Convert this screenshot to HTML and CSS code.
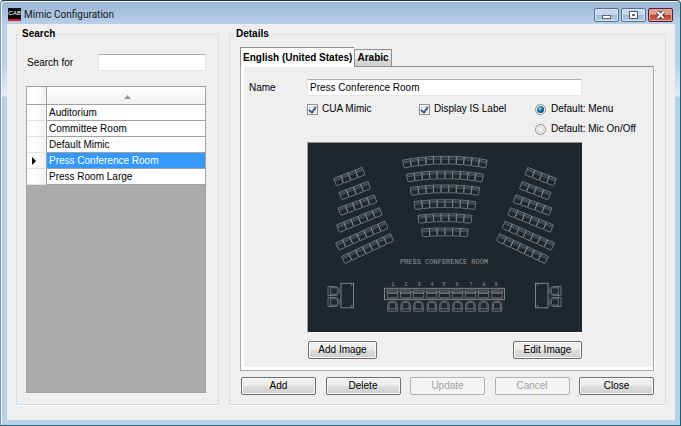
FILE: index.html
```html
<!DOCTYPE html>
<html lang="en">
<head>
<meta charset="utf-8">
<title>Mimic Configuration</title>
<link rel="stylesheet" href="styles.css">
</head>
<body>
<div class="window">
  <header class="titlebar">
    <span class="logo">CAB</span>
    <h1 class="title">Mimic Configuration</h1>
    <div class="caption-buttons">
      <button class="caption" type="button" aria-label="Minimize">
        <svg viewBox="0 0 23 12"><rect x="7.500" y="6.500" width="8" height="3" fill="#fff" stroke="#5a6472"/></svg>
      </button>
      <button class="caption" type="button" aria-label="Maximize">
        <svg viewBox="0 0 23 12"><path d="M7.500 2.500h8v7h-8z M10.500 5.500h2v1h-2z" fill="#fff" fill-rule="evenodd" stroke="#4d5666"/></svg>
      </button>
      <button class="caption caption-close" type="button" aria-label="Close window">
        <svg viewBox="0 0 23 12"><path d="M8.500 3l6 6M14.500 3l-6 6" stroke="#4e3a42" stroke-width="4"/><path d="M8.500 3l6 6M14.500 3l-6 6" stroke="#fff" stroke-width="2"/></svg>
      </button>
    </div>
  </header>

  <main class="client">
    <fieldset class="group search">
      <legend>Search</legend>
      <div class="search-row">
        <label for="search">Search for</label>
        <input class="field" id="search" type="text">
      </div>
      <div class="list">
        <table>
          <thead>
            <tr><th class="marker"></th><th class="sort"><svg viewBox="0 0 7 4" aria-label="Sorted ascending"><path d="M0 4L3.500 0L7 4z" fill="#999"/></svg></th></tr>
          </thead>
          <tbody>
            <tr><td class="marker"></td><td>Auditorium</td></tr>
            <tr><td class="marker"></td><td>Committee Room</td></tr>
            <tr><td class="marker"></td><td>Default Mimic</td></tr>
            <tr class="selected"><td class="marker"><svg viewBox="0 0 4 8"><path d="M0 0L4 4L0 8z"/></svg></td><td>Press Conference Room</td></tr>
            <tr><td class="marker"></td><td>Press Room Large</td></tr>
          </tbody>
        </table>
      </div>
    </fieldset>

    <fieldset class="group details">
      <legend>Details</legend>
      <div class="tabs" role="tablist">
        <button class="tab active" type="button" role="tab" aria-selected="true">English (United States)</button>
        <button class="tab" type="button" role="tab" aria-selected="false">Arabic</button>
      </div>
      <div class="panel">
        <label for="name">Name</label>
        <input class="field name" id="name" type="text" value="Press Conference Room">
        <div class="options">
          <label class="option"><input type="checkbox" checked>CUA Mimic</label>
          <label class="option"><input type="checkbox" checked>Display IS Label</label>
          <div class="radios">
            <label class="option"><input type="radio" name="default" checked>Default: Menu</label>
            <label class="option"><input type="radio" name="default">Default: Mic On/Off</label>
          </div>
        </div>
        <div class="mimic">
          <svg viewBox="308 143 274 189" fill="none" stroke="#8d8d8b" stroke-width="0.700">
            <defs>
              <!-- One seat, top edge centred on 0,0 -->
              <g id="seat">
                <path d="M-3.800 0H3.800V6.800Q3.800 7.900 2.800 7.900H-2.800Q-3.800 7.900 -3.800 6.800Z"/>
                <path d="M-3.800 1.600H3.800M-3 2.900H3" stroke-opacity="0.600"/>
              </g>
              <!-- Curved rows, each built on the shorter one -->
              <g id="c6">
                <use href="#seat" x="-3.900"/><use href="#seat" x="3.900"/>
                <use href="#seat" transform="translate(-11.700 .200) rotate(-2)"/><use href="#seat" transform="translate(11.700 .200) rotate(2)"/>
                <use href="#seat" transform="translate(-19.400 .700) rotate(-5)"/><use href="#seat" transform="translate(19.400 .700) rotate(5)"/>
              </g>
              <g id="c8"><use href="#c6"/><use href="#seat" transform="translate(-27.100 1.500) rotate(-7)"/><use href="#seat" transform="translate(27.100 1.500) rotate(7)"/></g>
              <g id="c10"><use href="#c8"/><use href="#seat" transform="translate(-34.700 2.500) rotate(-9)"/><use href="#seat" transform="translate(34.700 2.500) rotate(9)"/></g>
              <g id="c7">
                <use href="#seat"/>
                <use href="#seat" x="-7.700"/><use href="#seat" x="7.700"/>
                <use href="#seat" transform="translate(-15.500 .400) rotate(-4)"/><use href="#seat" transform="translate(15.500 .400) rotate(4)"/>
                <use href="#seat" transform="translate(-23.200 1.100) rotate(-6)"/><use href="#seat" transform="translate(23.200 1.100) rotate(6)"/>
              </g>
              <g id="c9"><use href="#c7"/><use href="#seat" transform="translate(-30.900 2) rotate(-8)"/><use href="#seat" transform="translate(30.900 2) rotate(8)"/></g>
              <g id="c11"><use href="#c9"/><use href="#seat" transform="translate(-38.500 3.200) rotate(-10)"/><use href="#seat" transform="translate(38.500 3.200) rotate(10)"/></g>
              <!-- Straight rows for the wings -->
              <g id="s4"><use href="#seat" x="3.900"/><use href="#seat" x="11.600"/><use href="#seat" x="19.300"/><use href="#seat" x="27"/></g>
              <g id="s5"><use href="#s4"/><use href="#seat" x="34.700"/></g>
              <g id="s6"><use href="#s5"/><use href="#seat" x="42.400"/></g>
              <g id="s7"><use href="#s6"/><use href="#seat" x="50.100"/></g>
              <g id="wing">
                <use href="#s4" transform="translate(333.500 178.500) rotate(-21)"/>
                <use href="#s4" transform="translate(339 192.500) rotate(-21)"/>
                <use href="#s5" transform="translate(338 208) rotate(-20)"/>
                <use href="#s6" transform="translate(336.500 225) rotate(-22)"/>
                <use href="#s7" transform="translate(335.500 243) rotate(-24)"/>
                <use href="#s7" transform="translate(341.500 256.500) rotate(-25)"/>
              </g>
              <g id="chair">
                <path d="M-4.800 10V4.500Q-4.800 .500 -2 0H2Q4.800 .500 4.800 4.500V10Z"/>
                <path d="M-3.400 7.600V2.800Q-2.500 1.200 0 1.200Q2.500 1.200 3.400 2.800V7.600"/>
                <path d="M-4.800 7.600H4.800"/>
              </g>
              <g id="place">
                <path d="M-5.200 7.800V.800H5.200V7.800Z"/>
                <path d="M-5.200 2.400H5.200M-5.200 3.400H5.200M-6.500 1.600H-5M5 1.600H6.500"/>
                <use href="#chair" y="11.200"/>
              </g>
              <g id="side-desk">
                <rect x="341" y="283.300" width="12.500" height="24.500" stroke-width="0.900"/>
                <circle cx="351.500" cy="285" r=".500"/><circle cx="351.500" cy="306" r=".500"/>
                <use href="#chair" transform="translate(339.200 291) rotate(90) scale(.95 1.120)"/>
                <use href="#chair" transform="translate(339.200 302) rotate(90) scale(.95 1.120)"/>
              </g>
            </defs>
            <use href="#c11" x="444.900" y="156.300"/>
            <use href="#c10" x="444.900" y="171"/>
            <use href="#c9" x="444.900" y="185"/>
            <use href="#c8" x="444.900" y="199.700"/>
            <use href="#c7" x="444.900" y="213.900"/>
            <use href="#c6" x="444.900" y="228"/>
            <use href="#wing"/>
            <use href="#wing" transform="translate(890 0) scale(-1 1)"/>
            <use href="#side-desk"/>
            <use href="#side-desk" transform="translate(889 0) scale(-1 1)"/>
            <rect x="384.500" y="288.300" width="120" height="11.400" stroke-width="0.900"/>
            <path d="M385.500 289.600H503.500M385.500 298.600H503.500" stroke-opacity="0.500"/>
            <use href="#place" x="392.500" y="290"/><use href="#place" x="405.700" y="290"/><use href="#place" x="418.500" y="290"/>
            <use href="#place" x="431.800" y="290"/><use href="#place" x="444.500" y="290"/><use href="#place" x="457.500" y="290"/>
            <use href="#place" x="470.500" y="290"/><use href="#place" x="483.500" y="290"/><use href="#place" x="497" y="290"/>
            <g class="numbers">
              <text x="393" y="286">1</text><text x="406" y="286">2</text><text x="419" y="286">3</text>
              <text x="432" y="286">4</text><text x="444" y="286">5</text><text x="457" y="286">6</text>
              <text x="471" y="286">7</text><text x="484" y="286">8</text><text x="496" y="286">9</text>
            </g>
            <text class="room" x="444" y="264">PRESS CONFERENCE ROOM</text>
          </svg>
        </div>
        <div class="image-buttons">
          <button class="button" type="button">Add Image</button>
          <button class="button" type="button">Edit Image</button>
        </div>
      </div>
      <div class="actions">
        <button class="button" type="button">Add</button>
        <button class="button" type="button">Delete</button>
        <button class="button" type="button" disabled>Update</button>
        <button class="button" type="button" disabled>Cancel</button>
        <button class="button" type="button">Close</button>
      </div>
    </fieldset>
  </main>
</div>
</body>
</html>
```

FILE: styles.css
```css
* { box-sizing: border-box; }

body {
  margin: 0;
  font: 10px/14px "Liberation Sans", Arial, sans-serif;
  color: #000;
}

button, input { font: inherit; color: inherit; margin: 0; }
svg { display: block; }

.window {
  display: flex;
  flex-direction: column;
  min-height: 100vh;
  padding: 0 5px 5px 6px;
  border: 1px solid #1d616c;
  border-top-color: #30303a;
  border-left-color: #8e9298;
  border-radius: 4px 4px 0 0;
  background: linear-gradient(#9bb5d3 0, #b7cfe8 23px, #b7cfe8 60px, #dfebf8 95px, #b8d1ea 96px);
  box-shadow: inset 1px 1px #edf4fb;
}

/* Title bar */
.titlebar { display: flex; align-items: center; height: 23px; padding: 4px 2px 0 1px; }
.logo {
  width: 13px;
  height: 13px;
  border-bottom: 2px solid #d81f2a;
  background: #0b0b0d;
  color: #fff;
  font: italic 6px/10px "Liberation Sans", Arial, sans-serif;
  text-align: center;
}
.title { flex: 1; margin: 0 0 0 3px; font: 10px/14px Roboto, sans-serif; color: #101820; }
.caption-buttons { display: flex; gap: 2px; }
.caption {
  width: 25px;
  height: 14px;
  padding: 0;
  border: 1px solid #5a6f8b;
  border-radius: 2px;
  background: linear-gradient(#c6d8ea 0 45%, #a0b9d4 50%, #b5cce4);
  box-shadow: inset 0 0 0 1px #d6e4f2;
}
.caption-close {
  border-color: #5a1f2a;
  background: linear-gradient(#dc9d92 0 45%, #b8432f 50%, #cf6f5c);
  box-shadow: inset 0 0 0 1px #e0a79d;
}

/* Client area */
.client {
  flex: 1;
  display: grid;
  grid-template-columns: 203px minmax(0, 1fr);
  gap: 10px;
  padding: 3px 9px 15px;
  background: #efefef;
}
.group {
  display: flex;
  flex-direction: column;
  min-width: 0;
  margin: 0;
  border: 1px solid #d3dfe9;
  box-shadow: 0 1px #fff;
}
.group legend { margin-left: -6px; padding: 0 2px; font-weight: bold; }
.search { padding: 13px 12px 11px 9px; }
.details { padding: 6px 11px 9px 10px; }

.field {
  height: 17px;
  padding: 0 2px;
  border: 1px solid #e3e6ea;
  border-top-color: #abadb3;
  background: #fff;
}
.search-row { display: flex; align-items: center; justify-content: space-between; padding-left: 1px; margin-bottom: 15px; }
.search-row .field { width: 108px; }

/* Mimic list */
.list { flex: 1; border: 1px solid #a0a0a0; background: #ababab; }
table { width: 100%; border-collapse: separate; border-spacing: 0; table-layout: fixed; }
th, td { height: 16px; padding: 1px 0 0 2px; border-bottom: 1px solid #a0a0a0; line-height: 14px; text-align: left; background: #fff; }
th { height: 18px; background: linear-gradient(#fff, #f1f2f4); }
.marker { width: 20px; padding: 1px 0 0 5px; border-right: 1px solid #a0a0a0; background: linear-gradient(90deg, #fff 40%, #eef0f2); }
td.marker { border-bottom-color: #e2e3e5; }
.marker svg { width: 4px; height: 8px; }
.sort svg { width: 7px; height: 4px; margin: 2px auto 0; }
.selected td:last-child { background: #3399ff; color: #fff; }

/* Tabs and their panel */
.tabs { display: flex; align-items: flex-end; }
.tab {
  height: 17px;
  padding: 0 2px;
  border: 1px solid #8c8e94;
  border-bottom: 0;
  background: linear-gradient(#f2f2f2 0 45%, #dcdcdc 55%, #cfcfcf);
  font-weight: bold;
  line-height: 16px;
}
.tab.active { position: relative; z-index: 1; height: 20px; margin-bottom: -1px; border-right: 0; background: #fff; }

.panel {
  flex: 1;
  display: grid;
  grid-template-columns: 58px minmax(0, 1fr) 66px;
  align-content: start;
  align-items: center;
  padding: 12px 5px 8px 8px;
  border: 1px solid #a9abb1;
  border-top-color: #8c8e94;
  box-shadow: inset 3px -3px #fff, 1px 0 #fff;
}
.name { grid-column: 2; width: 100%; }

.options { grid-column: 2 / 4; display: grid; grid-template-columns: 112px 116px 1fr; align-items: start; padding: 6px 0; }
.radios { display: grid; gap: 6px; }
.option { display: flex; align-items: center; gap: 4px; white-space: nowrap; }
.option input { appearance: none; display: grid; place-items: center; width: 11px; height: 11px; border: 1px solid #8e8f8f; background: #f4f4f4; box-shadow: inset 0 0 0 1px #fff, inset 0 0 0 2px #cfd3d6; }
.option input[type="radio"] { border-radius: 50%; }
.radios .option { gap: 5px; }
.option input[type="checkbox"]:checked::after {
  content: "";
  width: 3px;
  height: 6px;
  border: solid #4b5f97;
  border-width: 0 2px 2px 0;
  transform: rotate(35deg);
}
.option input[type="radio"]:checked::after {
  content: "";
  width: 7px;
  height: 7px;
  border-radius: 50%;
  background: radial-gradient(circle at 40% 35%, #8fe0f8, #1c6c9c 45%, #0d2f4c);
}

.mimic { grid-column: 2; border: 1px solid #a0a0a0; border-top-color: #8a8d90; border-right: 0; border-bottom-color: #fff; background: #1d2730; }
.mimic svg { width: 100%; height: auto; }
.room, .numbers { fill: #969896; stroke: none; text-anchor: middle; font-family: "Liberation Mono", monospace; }
.room { font-size: 7px; }
.numbers { font-size: 5px; }

.image-buttons { grid-column: 2; display: flex; justify-content: space-between; padding: 8px 0 0 1px; }
.image-buttons .button { width: 69px; }
.actions { display: flex; justify-content: space-between; padding: 6px 0 0 1px; }
.actions .button { width: 75px; }

.button {
  height: 18px;
  padding: 0;
  border: 1px solid #707070;
  border-radius: 2px;
  background: linear-gradient(#f2f2f2 0, #ebebeb 50%, #dddddd 50%, #cfcfcf);
  box-shadow: inset 0 0 0 1px #f7f7f7;
  line-height: 14px;
}
.button:disabled { border-color: #adb2b5; background: #f4f4f4; color: #a0a0a0; }
```
